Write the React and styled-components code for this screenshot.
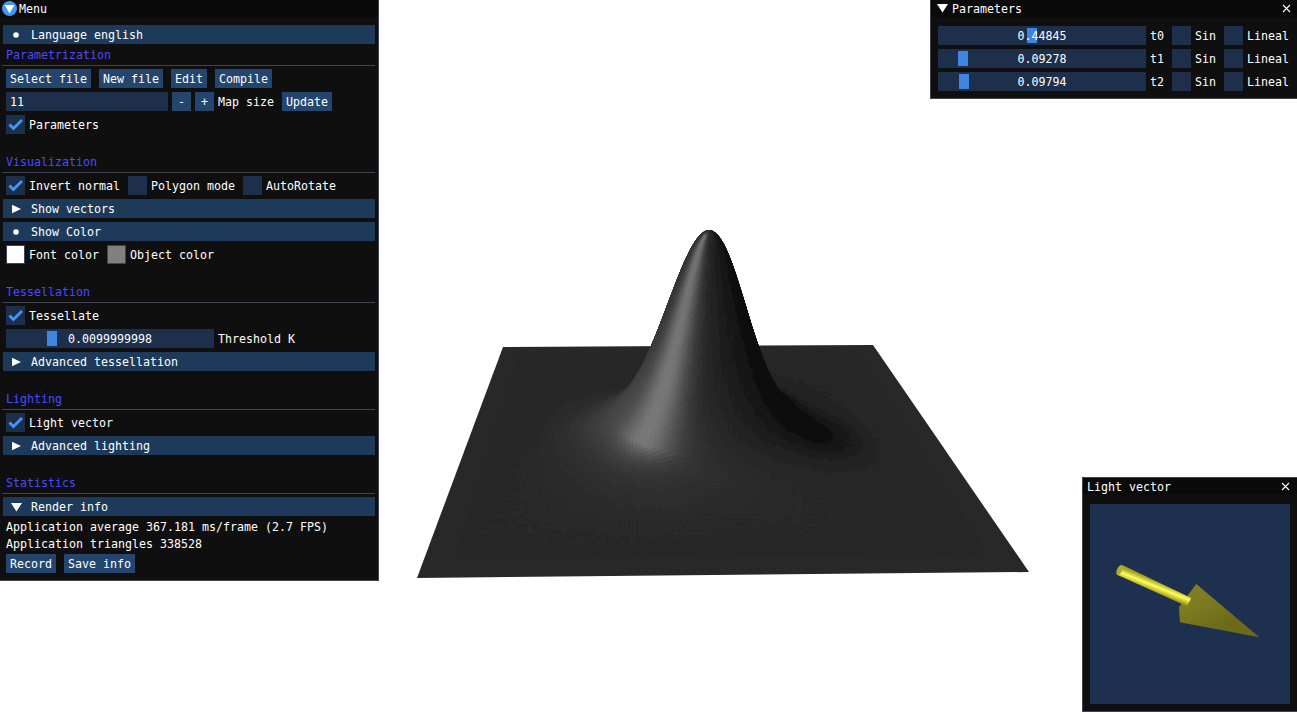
import React, { useMemo } from 'react'
import styled, { createGlobalStyle } from 'styled-components'

const GlobalStyle = createGlobalStyle`
  html, body {
    margin: 0;
    background: #fff;
    overflow: hidden;
  }
`;

const Desktop = styled.div`
  position: relative;
  width: 1297px;
  height: 712px;
  overflow: hidden;
  background: #fff;
  color: #fff;
  font-family: "DejaVu Sans Mono", "Liberation Mono", monospace;
  font-size: 11.63px;
  line-height: 15px;
  white-space: pre;
`;

const Scene = styled.svg`
  position: absolute;
  left: 0;
  top: 0;
`;

const Window = styled.section`
  position: absolute;
  left: ${p => p.$left}px;
  top: ${p => p.$top}px;
  width: ${p => p.$width}px;
  height: ${p => p.$height}px;
  box-sizing: border-box;
  border: 1px solid #43434f;
  background: #0f0f0f;
`;

const TitleBar = styled.header`
  display: flex;
  align-items: center;
  gap: ${p => p.$gap ?? 4}px;
  height: 17px;
  padding: 0 ${p => p.$right ?? 4}px 0 ${p => p.$pad ?? 4}px;
  background: #0a0a0a;
`;

// 13px box holding a 15px line: the glyphs sit 1px under the centre, as in the picture
const Label = styled.span`
  display: block;
  height: 13px;
`;

const TitleText = styled(Label)`
  flex: 1;
`;

const MenuBody = styled.div`
  display: flex;
  flex-direction: column;
  gap: 4px;
  padding: 8px 3px 0;
`;

const PanelBody = styled.div`
  display: flex;
  flex-direction: column;
  gap: 4px;
  padding: 9px 7px 0;
`;

const Header = styled.div`
  display: flex;
  align-items: center;
  gap: 8px;
  height: 19px;
  padding-left: 8px;
  background: #1d3a5a;
`;

const MarkerBox = styled.svg`
  display: block;
  width: 12px;
  height: 12px;
`;

const SectionLabel = styled(Label)`
  padding-left: 3px;
  color: #4a4aff;
`;

const Rule = styled.div`
  height: 1px;
  margin: 0 0 -1px -1px;
  background: #43434f;
`;

const Spacer = styled.div`
  height: 13px;
`;

const Row = styled.div`
  display: flex;
  align-items: center;
  gap: 8px;
  height: 19px;
  margin-left: ${p => p.$inset ?? 3}px;
`;

const Field = styled.div`
  display: flex;
  align-items: center;
  gap: 4px;
`;

const Line = styled(Label)`
  padding-left: 3px;
`;

const ButtonBox = styled.div`
  display: flex;
  align-items: center;
  justify-content: center;
  height: 19px;
  padding: 0 4px;
  background: #24456d;
`;

const SmallButton = styled(ButtonBox)`
  width: 19px;
  padding: 0;
`;

const TextInput = styled.div`
  display: flex;
  align-items: center;
  width: 158px;
  height: 19px;
  padding-left: 4px;
  background: #1d2f4b;
`;

const Box = styled.div`
  width: 19px;
  height: 19px;
  flex: none;
  background: #1d2f4b;
`;

const CheckMark = styled.svg`
  display: block;
  width: 19px;
  height: 19px;
`;

const Swatch = styled.div`
  width: 19px;
  height: 19px;
  box-sizing: border-box;
  border: 1px solid #3c4658;
  border-radius: 1px;
  background: ${p => p.$color};
`;

const SliderTrack = styled.div`
  position: relative;
  display: flex;
  align-items: center;
  justify-content: center;
  width: 208px;
  height: 19px;
  background: #1d2f4b;
`;

const SliderGrab = styled.div`
  position: absolute;
  left: ${p => p.$at}px;
  top: 2px;
  width: 10px;
  height: 15px;
  background: #3d85e0;
`;

const SliderValue = styled(Label)`
  position: relative;
`;

const Canvas = styled.div`
  width: 200px;
  height: 200px;
  background: #1e3050;
`;

const ArrowDrawing = styled.svg`
  display: block;
`;

const Marker = ({ kind }) => (
  <MarkerBox viewBox="0 0 12 12">
    {kind === 'bullet' && <circle cx="5" cy="6" r="2.8" fill="#fff" />}
    {kind === 'right' && <path d="M1 1.7 L10 6 L1 10.3 Z" fill="#fff" />}
    {kind === 'down' && <path d="M0 2 L11 2 L5.5 10.5 Z" fill="#fff" />}
  </MarkerBox>
);

const Button = ({ children }) => (
  <ButtonBox><Label>{children}</Label></ButtonBox>
);

const Check = ({ checked, label }) => (
  <Field>
    <Box>
      {checked && (
        <CheckMark viewBox="0 0 19 19">
          <path d="M3.4 9.6 L7.4 13.6 L16 5" fill="none" stroke="#4296fa" strokeWidth="2.8" />
        </CheckMark>
      )}
    </Box>
    <Label>{label}</Label>
  </Field>
);

const Slider = ({ value, at }) => (
  <SliderTrack>
    <SliderGrab $at={at} />
    <SliderValue>{value}</SliderValue>
  </SliderTrack>
);

const CollapsingHeader = ({ kind, children }) => (
  <Header>
    <Marker kind={kind} />
    <Label>{children}</Label>
  </Header>
);

const Section = ({ title }) => (
  <>
    <SectionLabel>{title}</SectionLabel>
    <Rule />
  </>
);

const CloseCross = () => (
  <svg width="9" height="9" viewBox="0 0 9 9">
    <path d="M1 1 L8 8 M8 1 L1 8" stroke="#fff" strokeWidth="1.1" fill="none" />
  </svg>
);

// homography of the unit square onto the plate's four screen corners
const quad = [[417, 578], [1029, 572], [873, 345], [503, 347]];

function makeProjector() {
  const [[x0, y0], [x1, y1], [x2, y2], [x3, y3]] = quad;
  const dx1 = x1 - x2, dx2 = x3 - x2, sx = x0 - x1 + x2 - x3;
  const dy1 = y1 - y2, dy2 = y3 - y2, sy = y0 - y1 + y2 - y3;
  const det = dx1 * dy2 - dx2 * dy1;
  const g = (sx * dy2 - dx2 * sy) / det;
  const h = (dx1 * sy - sx * dy1) / det;
  const a = x1 - x0 + g * x1, b = x3 - x0 + h * x3;
  const d = y1 - y0 + g * y1, e = y3 - y0 + h * y3;
  return (u, v, z) => {
    const w = g * u + h * v + 1;
    return [(a * u + b * v + x0) / w + 7 * z, (d * u + e * v + y0) / w - 201 * z];
  };
}

const NARROW = 0.082;
const WIDE = 0.18;
const WORLD_HEIGHT = 0.5;
const LIGHT = [-0.62, -0.36, 0.7];
const PLATE = 40;

// narrow peak on a low wide skirt, 1 at the top
function profile(r2) {
  return 0.88 * Math.exp(-r2 / (2 * NARROW * NARROW)) + 0.12 * Math.exp(-r2 / (2 * WIDE * WIDE));
}

const blob = (du, dv, cu, cv, s) => Math.exp(-((du - cu) ** 2 + (dv - cv) ** 2) / (2 * s * s));

function shade(u, v, dither) {
  const du = u - 0.5, dv = v - 0.5;
  const r2 = du * du + dv * dv;
  const dh = -WORLD_HEIGHT * (
    0.88 * Math.exp(-r2 / (2 * NARROW * NARROW)) / (NARROW * NARROW) +
    0.12 * Math.exp(-r2 / (2 * WIDE * WIDE)) / (WIDE * WIDE)
  );
  const zu = dh * du, zv = dh * dv;
  const len = Math.hypot(zu, zv, 1);
  const nl = (-zu * LIGHT[0] - zv * LIGHT[1] + LIGHT[2]) / len;
  let level = 17 + 23 * Math.max(nl, 0) / LIGHT[2];

  // glow left of the foot, dark pool right of it, faint lift in front
  level += 22 * blob(du, dv, -0.17, -0.02, 0.07);
  level -= 20 * blob(du, dv, 0.24, -0.06, 0.06);
  level += 4 * blob(du, dv, -0.05, -0.2, 0.13);

  // highlight running down one meridian
  const slope = Math.hypot(zu, zv);
  let phi = Math.atan2(-zv, -zu) + 2.3;
  while (phi > Math.PI) phi -= 2 * Math.PI;
  while (phi < -Math.PI) phi += 2 * Math.PI;
  level += 65 * Math.exp(-((phi / 0.36) ** 2)) * Math.min(1, (slope / 0.9) ** 2);

  // fade to the flat plate before the mesh ends
  const edge = Math.max(Math.abs(du), Math.abs(dv));
  const fade = Math.min(1, Math.max(0, (0.43 - edge) / 0.11));
  level = PLATE + (level - PLATE) * fade;

  return Math.round(Math.max(15, Math.min(level + dither, 255)));
}

function buildMesh() {
  const project = makeProjector();
  const N = 120;
  // cells get smaller toward the peak
  const warp = i => {
    const t = (i / N) * 2 - 1;
    return 0.5 + 0.45 * (0.6 * t * Math.abs(t) + 0.4 * t);
  };
  const cells = [];
  for (let j = N - 1; j >= 0; j--) {
    for (let i = 0; i < N; i++) {
      const u0 = warp(i), u1 = warp(i + 1);
      const v0 = warp(j), v1 = warp(j + 1);
      const pts = [[u0, v0], [u1, v0], [u1, v1], [u0, v1]]
        .map(([u, v]) => project(u, v, profile((u - 0.5) ** 2 + (v - 0.5) ** 2)).map(n => n.toFixed(1)).join(','))
        .join(' ');
      // small fixed noise so the 8-bit steps don't read as contour lines
      const noise = Math.abs(Math.sin(i * 12.9898 + j * 78.233) * 43758.5453) % 1;
      const c = shade((u0 + u1) / 2, (v0 + v1) / 2, noise - 0.5);
      cells.push({ pts, color: `rgb(${c},${c},${c})` });
    }
  }
  return cells;
}

const Surface = () => {
  const cells = useMemo(buildMesh, []);
  return (
    <Scene width="1297" height="712" viewBox="0 0 1297 712">
      <defs>
        <filter id="soften" x="0" y="0" width="100%" height="100%" filterUnits="objectBoundingBox">
          <feGaussianBlur stdDeviation="0.6" />
        </filter>
      </defs>
      <polygon points={quad.map(p => p.join(',')).join(' ')} fill="#282828" />
      <g filter="url(#soften)">
        {cells.map((c, i) => (
          <polygon key={i} points={c.pts} fill={c.color} stroke={c.color} strokeWidth="0.8" />
        ))}
      </g>
    </Scene>
  );
};

const LightArrow = () => (
  <ArrowDrawing width="200" height="200" viewBox="0 0 200 200">
    <defs>
      <linearGradient id="cone" x1="100" y1="85" x2="120" y2="128" gradientUnits="userSpaceOnUse">
        <stop offset="0" stopColor="#817e22" />
        <stop offset="0.45" stopColor="#7c7a20" />
        <stop offset="1" stopColor="#6c6a18" />
      </linearGradient>
      <linearGradient id="rod" x1="65" y1="77" x2="61" y2="87" gradientUnits="userSpaceOnUse">
        <stop offset="0" stopColor="#a8a41e" />
        <stop offset="0.45" stopColor="#ffff5c" />
        <stop offset="1" stopColor="#9c9818" />
      </linearGradient>
    </defs>
    <polygon points="106.3,80 169.3,133.3 90,118.3 89,103" fill="url(#cone)" />
    <polygon points="32.7,61.3 101.3,94 97,102.3 27,70.7" fill="url(#rod)" />
    <ellipse cx="29.6" cy="66" rx="2.6" ry="5.4" transform="rotate(25 29.6 66)" fill="#b0ac2c" />
  </ArrowDrawing>
);

const parameters = [
  { name: 't0', value: '0.44845', at: 89 },
  { name: 't1', value: '0.09278', at: 20 },
  { name: 't2', value: '0.09794', at: 21 },
];

const App = () => (
  <Desktop>
    <GlobalStyle />
    <Surface />

    <Window $left={-1} $top={-1} $width={380} $height={582}>
      <TitleBar $pad={2} $gap={2}>
        <svg width="15" height="15" viewBox="0 0 15 15">
          <circle cx="7.5" cy="7.5" r="7.5" fill="#4296fa" />
          <path d="M2.6 4 L12.4 4 L7.5 12.6 Z" fill="#fff" />
        </svg>
        <TitleText>Menu</TitleText>
      </TitleBar>
      <MenuBody>
        <CollapsingHeader kind="bullet">Language english</CollapsingHeader>
        <Section title="Parametrization" />
        <Row>
          <Button>Select file</Button>
          <Button>New file</Button>
          <Button>Edit</Button>
          <Button>Compile</Button>
        </Row>
        <Row>
          <Field>
            <TextInput><Label>11</Label></TextInput>
            <SmallButton><Label>-</Label></SmallButton>
            <SmallButton><Label>+</Label></SmallButton>
            <Label>Map size</Label>
          </Field>
          <Button>Update</Button>
        </Row>
        <Row>
          <Check checked label="Parameters" />
        </Row>
        <Spacer />

        <Section title="Visualization" />
        <Row>
          <Check checked label="Invert normal" />
          <Check label="Polygon mode" />
          <Check label="AutoRotate" />
        </Row>
        <CollapsingHeader kind="right">Show vectors</CollapsingHeader>
        <CollapsingHeader kind="bullet">Show Color</CollapsingHeader>
        <Row>
          <Field>
            <Swatch $color="#fff" />
            <Label>Font color</Label>
          </Field>
          <Field>
            <Swatch $color="#808080" />
            <Label>Object color</Label>
          </Field>
        </Row>
        <Spacer />

        <Section title="Tessellation" />
        <Row>
          <Check checked label="Tessellate" />
        </Row>
        <Row>
          <Field>
            <Slider value="0.0099999998" at={41} />
            <Label>Threshold K</Label>
          </Field>
        </Row>
        <CollapsingHeader kind="right">Advanced tessellation</CollapsingHeader>
        <Spacer />

        <Section title="Lighting" />
        <Row>
          <Check checked label="Light vector" />
        </Row>
        <CollapsingHeader kind="right">Advanced lighting</CollapsingHeader>
        <Spacer />

        <Section title="Statistics" />
        <CollapsingHeader kind="down">Render info</CollapsingHeader>
        <Line>Application average 367.181 ms/frame (2.7 FPS)</Line>
        <Line>Application triangles 338528</Line>
        <Row>
          <Button>Record</Button>
          <Button>Save info</Button>
        </Row>
      </MenuBody>
    </Window>

    <Window $left={930} $top={-1} $width={368} $height={100}>
      <TitleBar $pad={6} $gap={4} $right={6}>
        <svg width="11" height="11" viewBox="0 0 11 11">
          <path d="M0 1 L11 1 L5.5 9.5 Z" fill="#fff" />
        </svg>
        <TitleText>Parameters</TitleText>
        <CloseCross />
      </TitleBar>
      <PanelBody>
        {parameters.map(p => (
          <Row key={p.name} $inset={0}>
            <Field>
              <Slider value={p.value} at={p.at} />
              <Label>{p.name}</Label>
            </Field>
            <Check label="Sin" />
            <Check label="Lineal" />
          </Row>
        ))}
      </PanelBody>
    </Window>

    <Window $left={1082} $top={477} $width={216} $height={235}>
      <TitleBar $pad={4} $right={7}>
        <TitleText>Light vector</TitleText>
        <CloseCross />
      </TitleBar>
      <PanelBody>
        <Canvas>
          <LightArrow />
        </Canvas>
      </PanelBody>
    </Window>
  </Desktop>
)

export default App
